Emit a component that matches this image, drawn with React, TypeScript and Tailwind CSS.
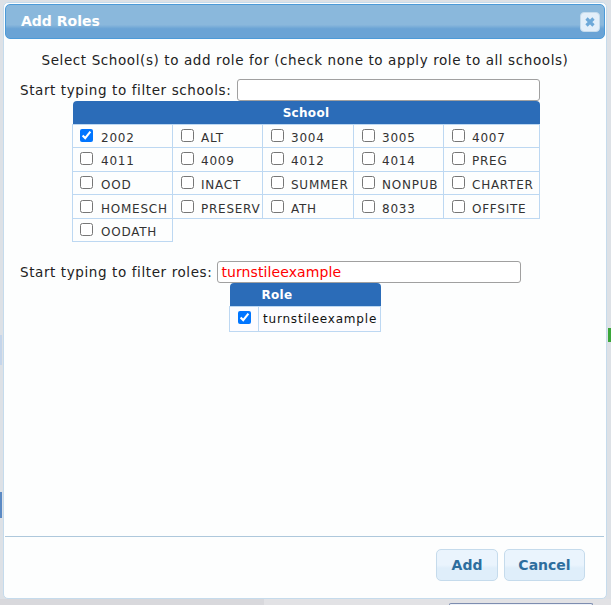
import React from "react";

const font = { fontFamily: '"DejaVu Sans", sans-serif' };

const schools = [
  ["2002", "ALT", "3004", "3005", "4007"],
  ["4011", "4009", "4012", "4014", "PREG"],
  ["OOD", "INACT", "SUMMER", "NONPUB", "CHARTER"],
  ["HOMESCH", "PRESERV", "ATH", "8033", "OFFSITE"],
  ["OODATH"],
];

function Cell({ label, first }: { label: string; first: boolean }) {
  const checked = label === "2002";
  return (
    <td className="h-[23.6px] border border-[#bdd8f2] p-0 align-middle">
      <div className={first ? "flex items-center pl-[7px]" : "flex items-center pl-[8px]"}>
        <input type="checkbox" defaultChecked={checked} className="mt-[-1px] h-[13px] w-[13px] shrink-0 accent-[#0075ff]" />
        <span className={first ? "ml-[8px] mt-[4px] whitespace-nowrap text-[12px] leading-[14px] tracking-[0.75px] text-[#333]" : "ml-[7px] mt-[4px] whitespace-nowrap text-[12px] leading-[14px] tracking-[0.75px] text-[#333]"}>{label}</span>
      </div>
    </td>
  );
}

export default function App() {
  return (
    <div className="relative h-[605px] w-[611px] overflow-hidden bg-[#dde1e6] pl-[3px] pt-[2px]" style={font}>
      <span className="absolute left-0 top-[335px] h-[30px] w-[2px] bg-[#c5d5ea]" />
      <span className="absolute left-0 top-[492px] h-[26px] w-[2px] bg-[#5b8ac4]" />
      <span className="absolute right-0 top-[328px] h-[14px] w-[3px] bg-[#3aa63a]" />
      <span className="absolute bottom-0 left-0 h-[6px] w-[264px] bg-[#d8d8dc]" />
      <span className="absolute bottom-0 left-[264px] h-[6px] w-[347px] bg-[#e2e2e5]" />
      <span className="absolute bottom-0 left-[449px] h-[2px] w-[144px] rounded-t-[3px] border-x border-t border-[#7d8db0] bg-[#eef2f8]" />
      <div className="relative flex h-[597px] w-[604px] flex-col rounded-[5px] border border-[#c5dbec] bg-[#fdfefe] p-[1px]">
        <div className="flex h-[35px] shrink-0 items-center justify-between rounded-[5px] border border-[#4c9ad8] bg-[linear-gradient(#8ab8dc_0%,#8ab8dc_60%,#6aa3d5_72%,#6aa3d5_100%)] pl-[15px] pr-[4px]">
          <span className="text-[14px] font-bold text-[#fff]">Add Roles</span>
          <span className="flex h-[20px] w-[20px] items-center justify-center rounded-[4px] border border-[#c5dbec] bg-[#e3effa]">
            <svg width="12" height="12" viewBox="0 0 12 12">
              <path d="M2.5 2.5 9.5 9.5M9.5 2.5 2.5 9.5" stroke="#6ea9d9" strokeWidth="3.2" />
            </svg>
          </span>
        </div>
        <p className="mt-[12px] text-center text-[13.5px] leading-[18px] tracking-[0.6px] text-[#222]">
          Select School(s) to add role for (check none to apply role to all schools)
        </p>
        <div className="mt-[10px] flex h-[22px] items-center pl-[15px]">
          <label className="text-[13.5px] tracking-[0.6px] text-[#222]">Start typing to filter schools:</label>
          <input className="ml-[6px] h-[22px] w-[303px] rounded-[3px] border border-[#a0a0a0] bg-white" />
        </div>
        <table className="ml-[67px] w-[467px] table-fixed border-collapse">
          <colgroup>
            <col className="w-[100px]" />
            <col className="w-[90px]" />
            <col className="w-[91px]" />
            <col className="w-[90px]" />
            <col className="w-[96px]" />
          </colgroup>
          <thead>
            <tr>
              <th colSpan={5} className="h-[23px] rounded-t-[4px] bg-[#2b6cb8] p-0 pt-[1px] text-center text-[12px] font-bold tracking-[0.3px] text-white">
                School
              </th>
            </tr>
          </thead>
          <tbody>
            {schools.map((row) => (
              <tr key={row[0]}>
                {row.map((s, i) => (
                  <Cell key={s} label={s} first={i === 0} />
                ))}
              </tr>
            ))}
          </tbody>
        </table>
        <div className="mt-[19px] flex h-[22px] items-center pl-[15px]">
          <label className="text-[13.5px] tracking-[0.6px] text-[#222]">Start typing to filter roles:</label>
          <input
            readOnly
            value="turnstileexample"
            className="ml-[5px] h-[22px] w-[304px] rounded-[3px] border border-[#a0a0a0] bg-white pl-[3px] text-[14px] tracking-[0.1px] text-[#f00]"
          />
        </div>
        <table className="ml-[224px] w-[151px] table-fixed border-collapse">
          <colgroup>
            <col className="w-[29px]" />
            <col className="w-[122px]" />
          </colgroup>
          <thead>
            <tr>
              <th className="h-[23px] rounded-tl-[4px] bg-[#2b6cb8] p-0" />
              <th className="h-[23px] rounded-tr-[4px] bg-[#2b6cb8] p-0 pl-[3px] text-left text-[12px] font-bold tracking-[0.3px] text-white">Role</th>
            </tr>
          </thead>
          <tbody>
            <tr>
              <td className="h-[24px] border border-[#bdd8f2] bg-[#fdfcff] p-0 text-center">
                <input type="checkbox" defaultChecked className="mt-[3px] h-[13px] w-[13px] accent-[#0075ff]" />
              </td>
              <td className="border border-[#bdd8f2] bg-[#fdfcff] p-0 pl-[4px] text-[12px] tracking-[0.8px] text-[#111]">turnstileexample</td>
            </tr>
          </tbody>
        </table>
        <div className="mt-auto mr-[1px] h-[1px] bg-[#aec8dc]" />
        <div className="flex h-[60px] shrink-0 items-start justify-end gap-[6px] pr-[20px] pt-[12px]">
          <button className="h-[32px] w-[62px] rounded-[5px] border border-[#c5dbec] bg-[linear-gradient(#eaf4fd_0%,#eaf4fd_50%,#dfeefa_60%,#dfeefa_100%)] text-[14px] font-bold text-[#2e6e9e]">Add</button>
          <button className="h-[32px] w-[81px] rounded-[5px] border border-[#c5dbec] bg-[linear-gradient(#eaf4fd_0%,#eaf4fd_50%,#dfeefa_60%,#dfeefa_100%)] text-[14px] font-bold text-[#2e6e9e]">Cancel</button>
        </div>
      </div>
    </div>
  );
}
